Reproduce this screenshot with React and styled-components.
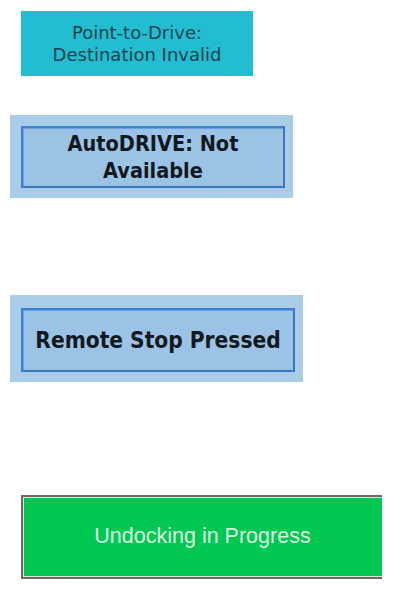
import React from 'react'
import styled, { createGlobalStyle } from 'styled-components'

const Global = createGlobalStyle`
  html, body {
    margin: 0;
    padding: 0;
    background: #ffffff;
  }
`

const Page = styled.div`
  width: 405px;
  height: 594px;
  display: flex;
  flex-direction: column;
  align-items: flex-start;
  overflow: hidden;
`

const CyanBox = styled.div`
  margin: 11px 0 0 21px;
  width: 232px;
  height: 65px;
  background: #22bdd1;
  color: #17434d;
  font-family: "DejaVu Sans", sans-serif;
  font-size: 18px;
  line-height: 22px;
  text-align: center;
  display: flex;
  align-items: center;
  justify-content: center;
`

const Frame = styled.div`
  margin: ${p => p.top}px 0 0 10px;
  width: ${p => p.w}px;
  height: ${p => p.h}px;
  background: #a9cde7;
  box-sizing: border-box;
  padding: ${p => p.pad};
  display: flex;
`

const Panel = styled.div`
  flex: 1;
  background: #9ac3e6;
  border: 2px solid #3f80d2;
  border-right-color: #3a76c4;
  border-bottom-color: #3a76c4;
  box-shadow: inset 1px 1px 0 #6aa2e0;
  color: #111820;
  font-family: "DejaVu Sans Condensed", "DejaVu Sans", sans-serif;
  font-weight: bold;
  font-size: ${p => p.size}px;
  line-height: 27px;
  text-align: center;
  display: flex;
  align-items: center;
  justify-content: center;
`

const GreenBox = styled.div`
  margin: 113px 0 0 21px;
  width: 361px;
  height: 84px;
  box-sizing: border-box;
  background: #00c853;
  border-left: 2px solid #6f6862;
  border-top: 2px solid #6f6862;
  border-bottom: 2px solid #6f6862;
  box-shadow: inset 1px 1px 0 #cfe9d6, inset 0 -1px 0 #cfe9d6;
  color: #dcf6e0;
  font-family: "Liberation Sans", Arial, sans-serif;
  font-size: 21.5px;
  display: flex;
  align-items: center;
  justify-content: center;
  padding-bottom: 2px;
`

export default function App() {
  return (
    <Page>
      <Global />
      <CyanBox>
        Point-to-Drive:
        <br />
        Destination Invalid
      </CyanBox>
      <Frame top={39} w={283} h={83} pad="11px 8px 10px 11px">
        <Panel size={21.5}>
          AutoDRIVE: Not
          <br />
          Available
        </Panel>
      </Frame>
      <Frame top={97} w={293} h={87} pad="13px 8px 10px 11px">
        <Panel size={22.5}>Remote Stop Pressed</Panel>
      </Frame>
      <GreenBox>Undocking in Progress</GreenBox>
    </Page>
  )
}
